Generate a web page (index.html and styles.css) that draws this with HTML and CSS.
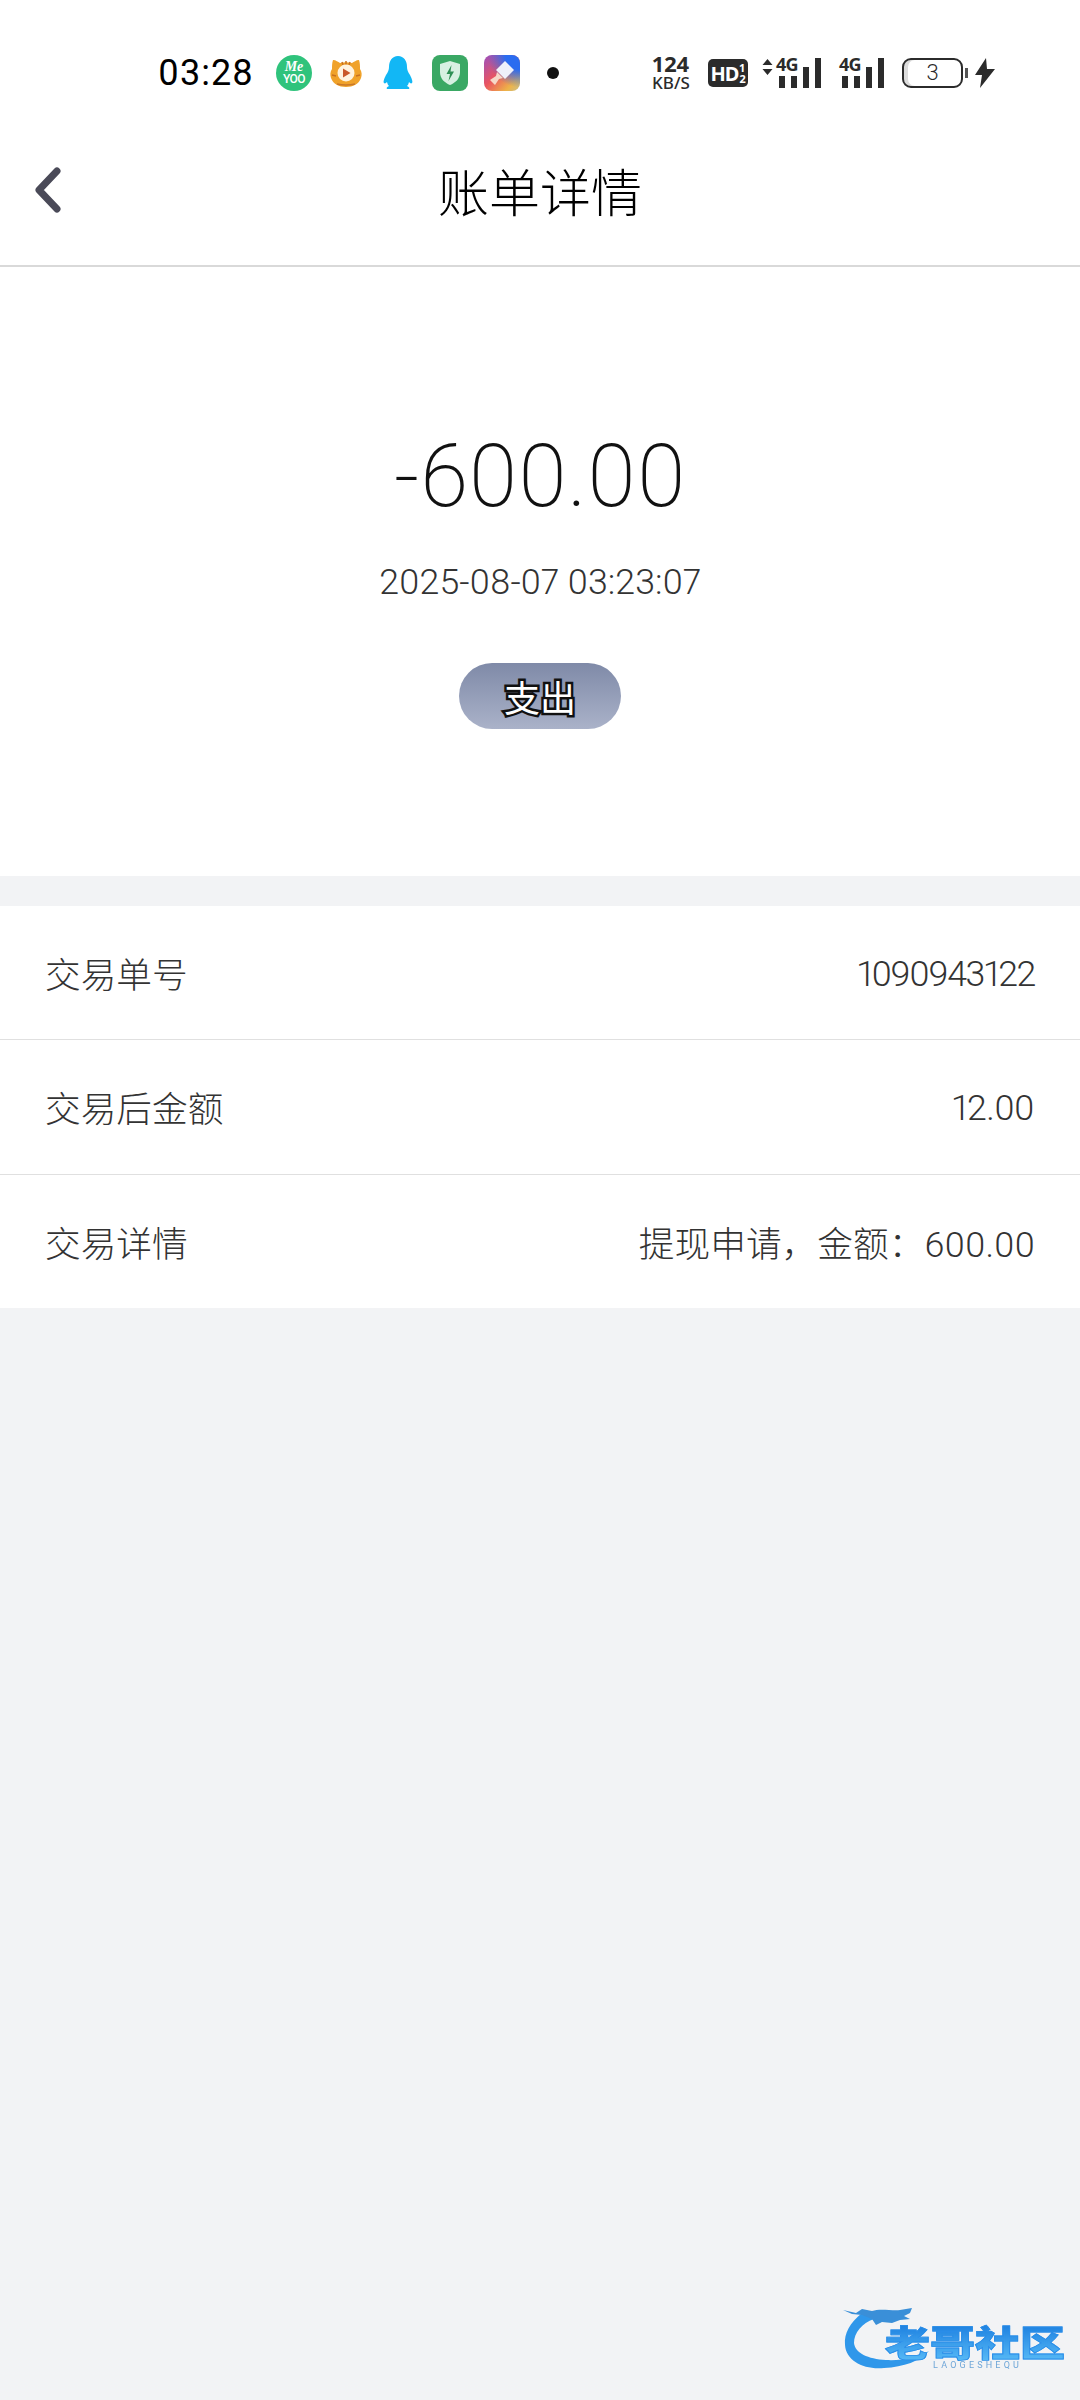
FILE: index.html
```html
<!DOCTYPE html>
<html lang="zh-CN">
<head>
  <meta charset="UTF-8">
  <meta name="viewport" content="width=device-width, initial-scale=1.0">
  <title>账单详情</title>
  <link rel="stylesheet" href="styles.css">
</head>
<body>

<!-- Status bar -->
<div class="status-bar">
  <span class="status-time">03:28</span>
  <div class="status-apps">
    <div class="app-meyoo"><span class="me">Me</span><span class="yoo">YOO</span></div>
    <svg class="app-icon" width="36" height="36" viewBox="0 0 36 36">
      <path d="M5 5c3 0 5 2 7 3 4-1 8-1 12 0 2-1 4-3 7-3 1 3 1 6 1 9 2 3 2 6 1 9-2 6-8 9-15 9S5 29 3 23c-1-3-1-6 1-9 0-3 0-6 1-9z" fill="#f0a22a"/>
      <path d="M14 7l1 3M18 6v4M22 7l-1 3M4 20l4 1M32 20l-4 1" stroke="#c9701f" stroke-width="1.500"/>
      <circle cx="18" cy="18" r="8.500" fill="#fff3df"/>
      <path d="M15 13.500l7.500 4.500-7.500 4.500z" fill="#c9582a"/>
      <path d="M9 29q9 2 18 0" stroke="#c9782a" stroke-width="1.500" fill="none"/>
    </svg>
    <svg class="app-icon" width="36" height="36" viewBox="0 0 36 36">
      <path d="M18 1c6 0 9 5 9 11 0 3 1 5 3 8 2 4 3 7 2 8-1 1-2 0-3-1-.5 2-1 3-2 4 2 1 3 2 2 3H7c-1-1 0-2 2-3-1-1-1.500-2-2-4-1 1-2 2-3 1-1-1 0-4 2-8 2-3 3-5 3-8C9 6 12 1 18 1z" fill="#12b7f5"/>
    </svg>
    <svg class="app-icon" width="36" height="36" viewBox="0 0 36 36">
      <rect width="36" height="36" rx="8" fill="#3aa864"/>
      <path d="M18 6l10 3v8c0 7-5 11-10 13-5-2-10-6-10-13V9z" fill="#d8f0e2"/>
      <path d="M19.500 10l-5 9h3.500l-1.500 7 5.500-9.500h-3.500z" fill="#2f8f55"/>
    </svg>
    <svg class="app-icon" width="36" height="36" viewBox="0 0 36 36">
      <defs>
        <linearGradient id="brushBg" x1="0" y1="0" x2="1" y2="1">
          <stop offset="0" stop-color="#9a4fc0"/>
          <stop offset="0.45" stop-color="#ea5560"/>
          <stop offset="0.8" stop-color="#eeb348"/>
          <stop offset="1" stop-color="#c9c08a"/>
        </linearGradient>
        <radialGradient id="brushBlue" cx="1" cy="0" r="0.9">
          <stop offset="0.45" stop-color="#2a6cf0"/>
          <stop offset="1" stop-color="#2a6cf0" stop-opacity="0"/>
        </radialGradient>
      </defs>
      <rect width="36" height="36" rx="8" fill="url(#brushBg)"/>
      <rect width="36" height="36" rx="8" fill="url(#brushBlue)"/>
      <path d="M21 6l9 9-9 9-9-9z" fill="#eef0fa"/>
      <path d="M13 17l6 6-4 1-4 6-5-5 6-4z" fill="#f6d9c8"/>
    </svg>
  </div>
  <span class="status-dot"></span>
  <div class="status-right">
    <div class="net-speed"><b>124</b><span>KB/S</span></div>
    <div class="hd-badge"><span class="hd">HD</span><span class="hd-num"><i>1</i><i>2</i></span></div>
    <div class="signal signal-main">
      <svg width="11" height="18" viewBox="0 0 11 18"><path d="M5.500 1l5 6H.5zM5.500 17l-5-6h10z" fill="#2b2b2b"/></svg>
      <div class="signal-group">
        <span class="net-type">4G</span>
        <div class="bars"><i class="b1"></i><i class="b2"></i><i class="b3"></i><i class="b4"></i></div>
      </div>
    </div>
    <div class="signal signal-second">
      <div class="signal-group">
        <span class="net-type">4G</span>
        <div class="bars"><i class="b1"></i><i class="b2"></i><i class="b3"></i><i class="b4"></i></div>
      </div>
    </div>
    <div class="battery"><div class="battery-body">3</div><span class="battery-nub"></span></div>
    <svg class="bolt" width="20" height="30" viewBox="0 0 20 30"><path d="M11 0L0 17h7L5 30l15-19h-8z" fill="#2b2b2b"/></svg>
  </div>
</div>

<!-- Nav bar -->
<div class="nav-bar">
  <svg class="back-icon" width="30" height="46" viewBox="0 0 30 46">
    <path d="M24 4L6 23l18 19" fill="none" stroke="#4a4a58" stroke-width="7" stroke-linecap="round" stroke-linejoin="round"/>
  </svg>
  <h1 class="nav-title">账单详情</h1>
</div>

<!-- Amount -->
<div class="hero">
  <div class="hero-amount">-600.00</div>
  <div class="hero-date">2025-08-07 03:23:07</div>
  <div class="hero-tag">支出</div>
</div>

<!-- Details -->
<div class="detail-list">
  <div class="detail-row">
    <span class="detail-label">交易单号</span>
    <span class="detail-value num num-long">1090943122</span>
  </div>
  <div class="detail-row">
    <span class="detail-label">交易后金额</span>
    <span class="detail-value num">12.00</span>
  </div>
  <div class="detail-row">
    <span class="detail-label">交易详情</span>
    <span class="detail-value">提现申请，金额：600.00</span>
  </div>
</div>

<!-- Watermark -->
<div class="watermark">
  <svg class="wm-dragon" width="100" height="70" viewBox="0 0 100 70">
    <path d="M20 8C8 18 2 28 3 40c1 16 19 25 39 23 20-1 36-7 45-17-11 6-27 10-43 9-18-1-31-7-32-17 0-10 8-20 20-24z" fill="#2f97ea"/>
    <path d="M1 5l13 3 6-4 10 2c8-3 20 0 28-1l12-2-2 5-6 3 6 3-10 1-8 3-10-1-6 3-4-6-10-4-10-1z" fill="#3a8fd8"/>
  </svg>
  <div class="wm-text">
    <span class="wm-name">老哥社区</span>
    <span class="wm-sub">LAOGESHEQU</span>
  </div>
</div>

</body>
</html>
```

FILE: styles.css
```css
/* --- Page --- */
html, body {
  margin: 0;
  padding: 0;
}

body {
  width: 1080px;
  height: 2400px;
  position: relative;
  overflow: hidden;
  background-color: #f2f3f5;
  font-family: Roboto, "Noto Sans CJK SC", sans-serif;
  font-variant-numeric: proportional-nums;
  color: #222;
}

/* --- Status bar --- */
.status-bar {
  height: 146px;
  box-sizing: border-box;
  padding-left: 158px;
  display: flex;
  align-items: center;
  background-color: #fff;
}

.status-time {
  width: 118px;
  font-size: 36px;
  color: #000;
  letter-spacing: 1px;
}

.status-apps {
  width: 264px;
  display: flex;
  gap: 16px;
  align-items: center;
}

.app-meyoo {
  width: 36px;
  height: 36px;
  flex-shrink: 0;
  border-radius: 50%;
  background-color: #2fc37c;
  color: #fff;
  display: flex;
  flex-direction: column;
  align-items: center;
  justify-content: center;
  line-height: 12px;
}

.app-meyoo .me {
  font-family: "Liberation Serif", serif;
  font-style: italic;
  font-weight: bold;
  font-size: 14px;
}

.app-meyoo .yoo {
  font-size: 12px;
  font-weight: 500;
  letter-spacing: -0.5px;
}

.status-dot {
  width: 12px;
  height: 12px;
  border-radius: 50%;
  background-color: #111;
  margin-left: 7px;
}

.status-right {
  margin-left: 91px;
  display: flex;
  align-items: center;
  color: #2b2b2b;
}

.net-speed {
  width: 42px;
  display: flex;
  flex-direction: column;
  align-items: center;
  font-family: "Noto Sans", sans-serif;
  line-height: 19px;
}

.net-speed b {
  font-size: 22px;
}

.net-speed span {
  font-size: 17px;
  font-weight: 500;
}

.hd-badge {
  width: 40px;
  height: 28px;
  margin-left: 16px;
  border-radius: 5px;
  background-color: #2b2b2b;
  color: #fff;
  display: flex;
  align-items: center;
  justify-content: center;
  gap: 1px;
  font-family: "Noto Sans", sans-serif;
  font-weight: bold;
}

.hd-badge .hd {
  font-size: 20px;
  letter-spacing: -1px;
}

.hd-num {
  display: flex;
  flex-direction: column;
  font-size: 11px;
  line-height: 11px;
}

.hd-num i {
  font-style: normal;
}

.signal {
  display: flex;
  align-items: flex-start;
  gap: 3px;
  height: 30px;
}

.signal-main {
  margin-left: 14px;
}

.signal-second {
  margin-left: 17px;
}

.signal-group {
  position: relative;
  width: 46px;
  height: 30px;
}

.net-type {
  position: absolute;
  top: -4px;
  left: 0;
  font-family: "Noto Sans", sans-serif;
  font-size: 18px;
  font-weight: bold;
  letter-spacing: -1px;
  line-height: 20px;
}

.bars {
  height: 30px;
  display: flex;
  align-items: flex-end;
  gap: 6px;
  padding-left: 3px;
}

.bars i {
  width: 6px;
  background-color: #2b2b2b;
}

.bars .b1 { height: 12px; }
.bars .b2 { height: 12px; }
.bars .b3 { height: 21px; }
.bars .b4 { height: 30px; }

.battery {
  margin-left: 17px;
  display: flex;
  align-items: center;
  gap: 2px;
}

.battery-body {
  width: 61px;
  height: 30px;
  box-sizing: border-box;
  border: 2.5px solid #2b2b2b;
  border-radius: 9px;
  text-align: center;
  font-size: 22px;
  font-weight: 300;
  line-height: 25px;
  box-shadow: inset 4px 0 0 #dcdcdc;
}

.battery-nub {
  width: 3px;
  height: 10px;
  background-color: #555;
}

.bolt {
  margin-left: 7px;
}

/* --- Nav bar --- */
.nav-bar {
  height: 121px;
  box-sizing: border-box;
  padding-bottom: 31px;
  background-color: #fff;
  border-bottom: 2px solid #d9d9d9;
  display: flex;
  align-items: center;
  justify-content: center;
  position: relative;
}

.back-icon {
  position: absolute;
  left: 33px;
  top: 21px;
}

.nav-title {
  margin: 0;
  font-size: 51px;
  font-weight: 300;
  color: #000;
}

/* --- Amount --- */
.hero {
  height: 440px;
  padding-top: 169px;
  display: flex;
  flex-direction: column;
  align-items: center;
  background-color: #fff;
}

.hero-amount {
  font-size: 87px;
  font-weight: 200;
  line-height: 80px;
  color: #111;
}

.hero-date {
  margin-top: 44px;
  font-size: 35.7px;
  font-weight: 300;
  line-height: 44px;
  color: #333;
}

.hero-tag {
  width: 162px;
  height: 66px;
  margin-top: 59px;
  border-radius: 33px;
  background: linear-gradient(#7f8aa8, #aab2c9);
  display: flex;
  align-items: center;
  justify-content: center;
  font-size: 36px;
  color: #fff;
  -webkit-text-stroke: 5px #111;
  paint-order: stroke fill;
}

/* --- Details --- */
.detail-list {
  margin-top: 30px;
  background-color: #fff;
}

.detail-row {
  height: 133.33px;
  padding: 0 45px 0 45px;
  display: flex;
  align-items: center;
  justify-content: space-between;
  border-bottom: 1px solid #e0e0e0;
  font-size: 35.7px;
  font-weight: 300;
  color: #333;
}

.detail-row:last-child {
  border-bottom: none;
}

.detail-value.num {
  padding-top: 3px;
  padding-right: 1px;
  letter-spacing: -0.6px;
}

.detail-value.num-long {
  padding-right: 0;
  letter-spacing: -1.4px;
}

/* --- Watermark --- */
.watermark {
  position: absolute;
  left: 842px;
  top: 2305px;
  width: 225px;
  height: 70px;
  filter: blur(0.5px);
}

.wm-dragon {
  position: absolute;
  left: 0;
  top: 0;
}

.wm-text {
  position: absolute;
  left: 43px;
  top: 14px;
  display: flex;
  flex-direction: column;
}

.wm-name {
  font-family: "Noto Sans CJK SC", sans-serif;
  font-size: 45px;
  font-weight: 900;
  line-height: 46px;
  transform: scaleY(0.8);
  background: linear-gradient(#1c7fe0, #55b8f5);
  -webkit-background-clip: text;
  background-clip: text;
  color: transparent;
  -webkit-text-stroke: 1px #2a8de8;
}

.wm-sub {
  margin-top: -5px;
  margin-left: 48px;
  font-size: 9px;
  letter-spacing: 3.2px;
  line-height: 10px;
  color: #6fa6d8;
}
```
